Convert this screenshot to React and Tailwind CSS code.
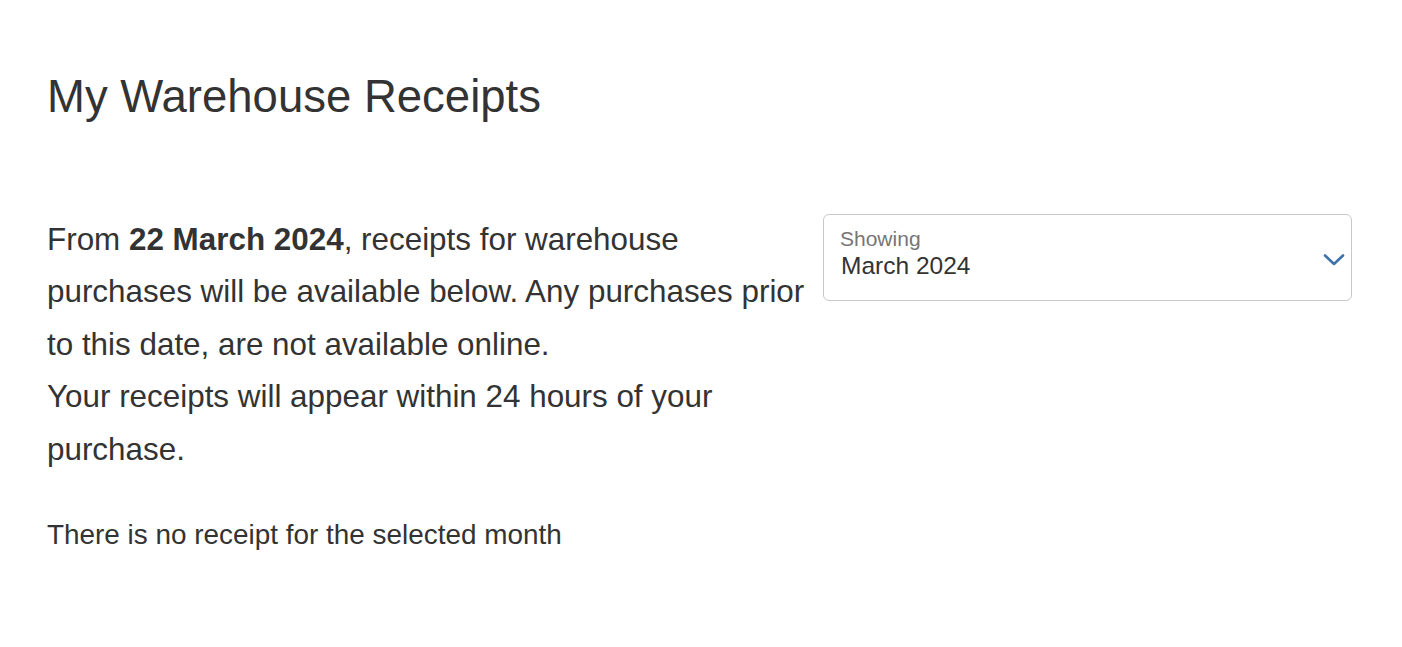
import React from "react";

const Chevron = () => (
  <svg width="22" height="14" viewBox="0 0 22 14" fill="none" className="block">
    <path d="M2 2.5 L11 11 L20 2.5" stroke="#3d72ab" strokeWidth="2.6" strokeLinecap="round" strokeLinejoin="round" />
  </svg>
);

const MonthSelect = ({ label, value }) => (
  <div className="relative w-full rounded-[6px] border border-[#c8c8c8] bg-white pl-[16px] pr-[48px] pt-[12px] pb-[19px]">
    <div className="text-[21px] leading-[24px] text-[#767676]">{label}</div>
    <div className="ml-[1px] text-[24.5px] leading-[30px] text-[#333333]">{value}</div>
    <div className="absolute right-[6px] top-[38px]">
      <Chevron />
    </div>
  </div>
);

export default function App() {
  return (
    <div className="min-h-[647px] bg-white text-[#333333]" style={{ fontFamily: '"Liberation Sans", Arial, sans-serif' }}>
      <div className="pl-[47px] pr-[50px] pt-[72px]">
        {/* Page heading */}
        <h1 className="text-[45.5px] leading-[49.5px] font-normal">My Warehouse Receipts</h1>

        <div className="mt-[92px] flex">
          <div className="w-[776px] shrink-0 pr-[8px]">
            <p className="text-[31.4px] leading-[52.5px]">
              From <strong className="font-bold">22 March 2024</strong>, receipts for warehouse purchases will be available below. Any purchases prior to this date, are not available online.
              <br />
              Your receipts will appear within 24 hours of your purchase.
            </p>
            <p className="mt-[38px] text-[27.9px] leading-[42px]">There is no receipt for the selected month</p>
          </div>
          <div className="flex-1">
            <MonthSelect label="Showing" value="March 2024" />
          </div>
        </div>
      </div>
    </div>
  );
}
